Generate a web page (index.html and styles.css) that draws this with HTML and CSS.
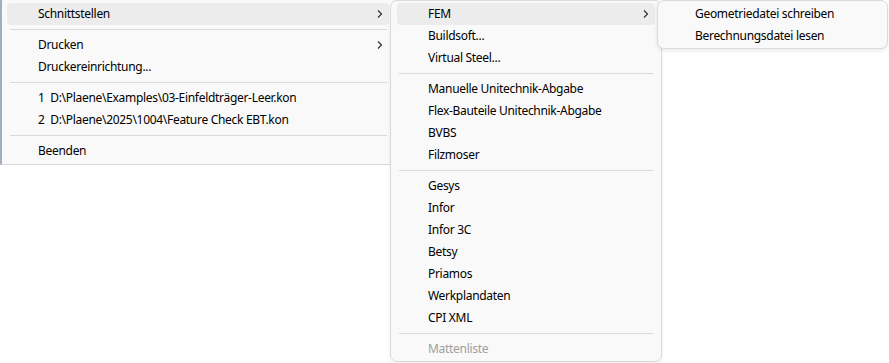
FILE: index.html
```html
<!DOCTYPE html>
<html lang="de">
<head>
    <meta charset="UTF-8">
    <meta name="viewport" content="width=device-width, initial-scale=1.0">
    <title>Menü</title>
    <link rel="stylesheet" href="styles.css">
</head>
<body>
    <!-- Hauptmenü (Datei) -->
    <div class="menu menu-main">
        <div class="item active"><span>Schnittstellen</span><svg class="arrow" width="6" height="10" viewBox="0 0 6 10"><path d="M1 1.5 L4.5 5 L1 8.5"/></svg></div>
        <div class="sep"></div>
        <div class="item"><span>Drucken</span><svg class="arrow" width="6" height="10" viewBox="0 0 6 10"><path d="M1 1.5 L4.5 5 L1 8.5"/></svg></div>
        <div class="item"><span>Druckereinrichtung...</span></div>
        <div class="sep"></div>
        <div class="item"><span>1&nbsp; D:\Plaene\Examples\03-Einfeldträger-Leer.kon</span></div>
        <div class="item"><span>2&nbsp; D:\Plaene\2025\1004\Feature Check EBT.kon</span></div>
        <div class="sep"></div>
        <div class="item"><span>Beenden</span></div>
    </div>

    <!-- Untermenü Schnittstellen -->
    <div class="menu menu-sub">
        <div class="item active"><span>FEM</span><svg class="arrow" width="6" height="10" viewBox="0 0 6 10"><path d="M1 1.5 L4.5 5 L1 8.5"/></svg></div>
        <div class="item"><span>Buildsoft...</span></div>
        <div class="item"><span>Virtual Steel...</span></div>
        <div class="sep"></div>
        <div class="item"><span>Manuelle Unitechnik-Abgabe</span></div>
        <div class="item"><span>Flex-Bauteile Unitechnik-Abgabe</span></div>
        <div class="item"><span>BVBS</span></div>
        <div class="item"><span>Filzmoser</span></div>
        <div class="sep"></div>
        <div class="item"><span>Gesys</span></div>
        <div class="item"><span>Infor</span></div>
        <div class="item"><span>Infor 3C</span></div>
        <div class="item"><span>Betsy</span></div>
        <div class="item"><span>Priamos</span></div>
        <div class="item"><span>Werkplandaten</span></div>
        <div class="item"><span>CPI XML</span></div>
        <div class="sep"></div>
        <div class="item disabled"><span>Mattenliste</span></div>
    </div>

    <!-- Untermenü FEM -->
    <div class="menu menu-fem">
        <div class="item"><span>Geometriedatei schreiben</span></div>
        <div class="item"><span>Berechnungsdatei lesen</span></div>
    </div>
</body>
</html>
```

FILE: styles.css
```css
/* Grundlayout */
body {
    margin: 0;
    padding: 0;
    background-color: #ffffff;
    font-family: "Noto Sans", "Open Sans", sans-serif;
    font-size: 12px;
    letter-spacing: -0.3px;
    color: #000000;
    position: relative;
    height: 363px;
    overflow: hidden;
}

/* Gemeinsamer Stil der Menüs (Fenster auf dem Desktop) */
.menu {
    position: absolute;
    background-color: #f9f9f9;
    border: 1px solid #dadada;
    box-sizing: border-box;
    padding: 2px 0 1px 0;
}

.menu-main {
    left: 0;
    top: -1px;
    width: 396px;
    padding: 3px 0 2px 0;
    border-left: 2px solid #a2aec0;
    border-radius: 0;
}

.menu-sub {
    left: 390px;
    top: 0;
    width: 272px;
    border-radius: 7px;
    box-shadow: 0 2px 4px rgba(0, 0, 0, 0.06);
}

.menu-fem {
    left: 657px;
    top: 0;
    width: 231px;
    border-radius: 7px;
    box-shadow: 0 2px 4px rgba(0, 0, 0, 0.08);
}

/* Menüeinträge */
.item {
    display: flex;
    align-items: center;
    justify-content: space-between;
    height: 22px;
    line-height: 22px;
    margin: 0 6px;
    padding: 0 6px 0 31px;
    border-radius: 4px;
    white-space: nowrap;
}

.menu-main .item {
    margin: 0 6px 0 5px;
}

.item.active {
    background-color: #ececec;
}

.item.disabled {
    color: #a0a0a0;
}

.arrow path {
    fill: none;
    stroke: #2a2a2a;
    stroke-width: 1.1;
}

/* Trennlinien */
.sep {
    height: 1px;
    margin: 4px 8px;
    background-color: #d9d9d9;
}
```
